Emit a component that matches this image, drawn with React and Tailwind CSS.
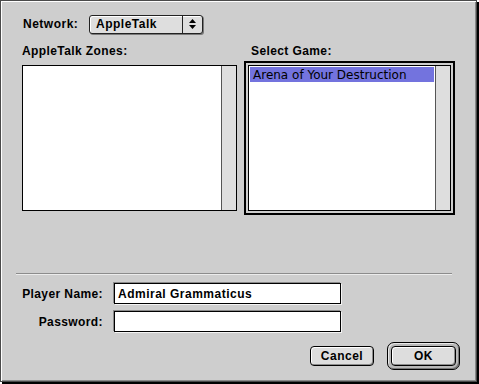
const chicago = { fontFamily: '"Liberation Sans", Arial, sans-serif' };
const geneva = { fontFamily: '"DejaVu Sans", Verdana, sans-serif' };

function ListBox({ width, children }) {
  return (
    <div className={`flex h-[146px] border border-black bg-white ${width}`}>
      <div className="flex-1 p-px">{children}</div>
      <div className="w-[15px] border-l border-[#555] bg-[#dedede]" />
    </div>
  );
}

function Field({ value }) {
  return (
    <div
      className="flex h-[21px] w-[227px] items-center border border-black bg-white pl-[3px] text-[12px] font-bold tracking-[0.5px] text-black shadow-[-1px_-1px_0_#8a8a8a,1px_1px_0_#f4f4f4]"
      style={chicago}
    >
      {value}
    </div>
  );
}

function Button({ label, className = '' }) {
  return (
    <div
      className={`flex h-[20px] items-center justify-center rounded-[4px] border border-black bg-[#dddddd] text-[12px] font-bold tracking-[0.5px] text-black shadow-[inset_1px_1px_0_#fff,inset_-1px_-1px_0_#8c8c8c] ${className}`}
      style={chicago}
    >
      {label}
    </div>
  );
}

export default function App() {
  return (
    <div className="h-[384px] w-[479px] bg-white">
      <div className="h-[382px] w-[477px] border border-[#4a4a4a] bg-[#cecece] shadow-[2px_2px_0_#000]">
        <div
          className="flex h-full flex-col pl-[15px] pr-[16px] pt-[13px] text-black shadow-[inset_1px_1px_0_#fff,inset_-1px_-1px_0_#8a8a8a]"
          style={chicago}
        >
          {/* network popup */}
          <div className="flex h-[20px] items-center pl-[7px]">
            <span className="w-[66px] text-[12px] font-bold tracking-[0.5px]">Network:</span>
            <div className="flex h-[19px] w-[114px] rounded-[3px] border border-[#222] bg-[#dedede] shadow-[inset_1px_1px_0_#fff,1px_1px_0_#7a7a7a]">
              <span className="flex flex-1 items-center pl-[6px] text-[12px] font-bold tracking-[0.5px]">AppleTalk</span>
              <span className="flex w-[20px] items-center justify-center border-l border-[#222]">
                <svg width="7" height="10" viewBox="0 0 7 10">
                  <polygon points="3.5,0 7,4 0,4" fill="#000" />
                  <polygon points="0,6 7,6 3.5,10" fill="#000" />
                </svg>
              </span>
            </div>
          </div>

          {/* lists */}
          <div className="mt-[9px] grid grid-cols-[222px_211px] pl-[6px]">
            <div>
              <div className="text-[12px] font-bold leading-[16px] tracking-[0.4px]">AppleTalk Zones:</div>
              <div className="mt-[6px]">
                <ListBox width="w-[215px]" />
              </div>
            </div>
            <div>
              <div className="pl-[7px] text-[12px] font-bold leading-[16px] tracking-[0.4px]">Select Game:</div>
              <div className="mt-[2px] w-[211px] border-2 border-black p-[2px]">
                <ListBox width="w-[203px]">
                  <div
                    className="flex h-[15px] items-center bg-[#7373de] pl-[3px] text-[12px] text-black"
                    style={geneva}
                  >
                    Arena of Your Destruction
                  </div>
                </ListBox>
              </div>
            </div>
          </div>

          {/* separator */}
          <div className="mt-[58px] h-[2px] w-[436px] border-t border-b border-t-[#8c8c8c] border-b-[#ececec]" />

          {/* form */}
          <div className="mt-[8px] flex items-center">
            <span className="w-[88px] pr-px text-right text-[12px] font-bold tracking-[0.4px]">Player Name:</span>
            <div className="ml-[10px]">
              <Field value="Admiral Grammaticus" />
            </div>
          </div>
          <div className="mt-[7px] flex items-center">
            <span className="w-[88px] pr-px text-right text-[12px] font-bold tracking-[0.4px]">Password:</span>
            <div className="ml-[10px]">
              <Field value="" />
            </div>
          </div>

          {/* buttons */}
          <div className="mt-[10px] flex items-center justify-end">
            <Button label="Cancel" className="w-[64px]" />
            <div className="ml-[13px] rounded-[7px] border border-black bg-[#b8b8b8] p-[3px] shadow-[inset_1px_1px_0_#e8e8e8,inset_-1px_-1px_0_#777]">
              <Button label="OK" className="w-[65px]" />
            </div>
          </div>
        </div>
      </div>
    </div>
  );
}
